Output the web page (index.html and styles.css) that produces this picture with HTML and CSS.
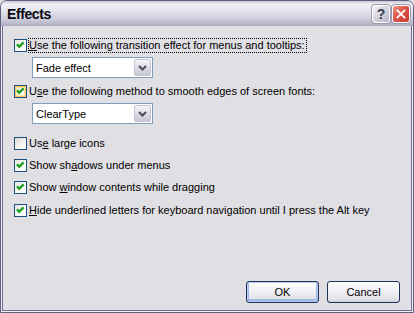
FILE: index.html
```html
<!DOCTYPE html>
<html lang="en">
<head>
    <meta charset="UTF-8">
    <meta name="viewport" content="width=device-width, initial-scale=1.0">
    <title>Effects</title>
    <link rel="stylesheet" href="styles.css">
</head>
<body>
    <div class="window">
        <div class="titlebar">
            <span class="title">Effects</span>
            <div class="title-buttons">
                <span class="tbtn help">?</span>
                <span class="tbtn close">
                    <svg width="18" height="18" viewBox="0 0 18 18"><path d="M5 5 L13 13 M13 5 L5 13" stroke="#fff" stroke-width="2" stroke-linecap="square"/></svg>
                </span>
            </div>
        </div>
        <div class="client">
            <div class="row">
                <span class="check on"><svg width="11" height="11" viewBox="0 0 11 11"><path d="M2 4.2 L4.2 6.8 L8.6 2.3" fill="none" stroke="#21a121" stroke-width="2.4"/></svg></span>
                <span class="label focus"><u>U</u>se the following transition effect for menus and tooltips:</span>
            </div>
            <div class="combo">
                <span class="combo-text">Fade effect</span>
                <span class="combo-btn"><svg width="9" height="6" viewBox="0 0 9 6"><path d="M1 1 L4.5 4.5 L8 1" fill="none" stroke="#4a4a5a" stroke-width="2"/></svg></span>
            </div>
            <div class="row">
                <span class="check on hot"><svg width="11" height="11" viewBox="0 0 11 11"><path d="M2 4.2 L4.2 6.8 L8.6 2.3" fill="none" stroke="#21a121" stroke-width="2.4"/></svg></span>
                <span class="label">U<u>s</u>e the following method to smooth edges of screen fonts:</span>
            </div>
            <div class="combo">
                <span class="combo-text">ClearType</span>
                <span class="combo-btn"><svg width="9" height="6" viewBox="0 0 9 6"><path d="M1 1 L4.5 4.5 L8 1" fill="none" stroke="#4a4a5a" stroke-width="2"/></svg></span>
            </div>
            <div class="row spaced">
                <span class="check off"></span>
                <span class="label">Us<u>e</u> large icons</span>
            </div>
            <div class="row tight">
                <span class="check on"><svg width="11" height="11" viewBox="0 0 11 11"><path d="M2 4.2 L4.2 6.8 L8.6 2.3" fill="none" stroke="#21a121" stroke-width="2.4"/></svg></span>
                <span class="label">Show sh<u>a</u>dows under menus</span>
            </div>
            <div class="row tight">
                <span class="check on"><svg width="11" height="11" viewBox="0 0 11 11"><path d="M2 4.2 L4.2 6.8 L8.6 2.3" fill="none" stroke="#21a121" stroke-width="2.4"/></svg></span>
                <span class="label">Show <u>w</u>indow contents while dragging</span>
            </div>
            <div class="row tight last">
                <span class="check on"><svg width="11" height="11" viewBox="0 0 11 11"><path d="M2 4.2 L4.2 6.8 L8.6 2.3" fill="none" stroke="#21a121" stroke-width="2.4"/></svg></span>
                <span class="label"><u>H</u>ide underlined letters for keyboard navigation until I press the Alt key</span>
            </div>
            <div class="buttons">
                <button class="btn default">OK</button>
                <button class="btn">Cancel</button>
            </div>
        </div>
    </div>
</body>
</html>
```
FILE: styles.css
```css
body {
    margin: 0;
    font-family: "Liberation Sans", Arial, sans-serif;
    font-size: 11px;
    color: #000;
    background: #e0dfe3;
}
.window {
    box-sizing: border-box;
    width: 414px;
    height: 313px;
    border: 1px solid #5f5f80;
    border-radius: 7px 7px 0 0;
    background: #eeeef4;
    display: flex;
    flex-direction: column;
    overflow: hidden;
}
.titlebar {
    height: 25px;
    flex: none;
    display: flex;
    align-items: center;
    justify-content: space-between;
    padding: 0 3px 0 6px;
    background: linear-gradient(#c3c3d3 0%, #f2f2f7 12%, #e6e6ee 35%, #d4d4e0 65%, #bdbdce 88%, #a9a9be 100%);
}
.title {
    font-weight: bold;
    font-size: 14px;
    letter-spacing: -0.4px;
    color: #0a0a14;
    margin-top: 1px;
}
.title-buttons {
    display: flex;
    gap: 2px;
    margin-top: 1px;
}
.tbtn {
    box-sizing: border-box;
    width: 18px;
    height: 18px;
    border: 1px solid #fff;
    border-radius: 3px;
    display: flex;
    align-items: center;
    justify-content: center;
    box-shadow: 0 0 0 1px #9a9ab0;
}
.help {
    background: linear-gradient(135deg, #f4f4f8, #c8c8d6 70%, #b4b4c6);
    color: #3c3c50;
    font-weight: bold;
    font-size: 14px;
}
.close {
    background: linear-gradient(135deg, #f09a88, #d9544a 45%, #c8382e);
}
.client {
    flex: 1;
    margin: 0 1px 1px;
    border: 1px solid #6e6e92;
    border-top: none;
    background: #e0dfe3;
    padding: 13px 11px 0 11px;
    display: flex;
    flex-direction: column;
}
.row {
    display: flex;
    align-items: center;
    height: 13px;
}
.row.spaced {
    margin-top: 6px;
}
.row.tight {
    margin-top: 9px;
}
.row.last {
    margin-top: 10px;
}
.check {
    box-sizing: border-box;
    width: 13px;
    height: 13px;
    flex: none;
    border: 1px solid #1c5180;
    background: linear-gradient(135deg, #e6e6e0, #fbfbfa 60%, #fff);
    display: flex;
    align-items: center;
    justify-content: center;
}
.check.hot {
    box-shadow: inset 0 0 0 1px #f8c55e, inset 0 0 0 2px #fde49c;
}
.check.off {
    background: linear-gradient(135deg, #d8d8d2, #f2f2ef 55%, #fff);
}
.label {
    margin-left: 1px;
    border: 1px dotted transparent;
    line-height: 13px;
    padding-right: 1px;
    white-space: nowrap;
}
.label.focus {
    border-color: #000;
}
.combo {
    box-sizing: border-box;
    width: 121px;
    height: 21px;
    margin: 5px 0 7px 18px;
    border: 1px solid #7f9db9;
    background: #fff;
    display: flex;
    align-items: center;
    justify-content: space-between;
    padding: 0 1px 0 3px;
}
.combo-btn {
    box-sizing: border-box;
    width: 17px;
    height: 17px;
    border: 1px solid #c3c3d3;
    border-radius: 2px;
    background: linear-gradient(#f6f6fa, #d9d9e4 60%, #c8c8d6);
    display: flex;
    align-items: center;
    justify-content: center;
}
.buttons {
    margin-top: auto;
    margin-bottom: 7px;
    display: flex;
    justify-content: flex-end;
    gap: 8px;
}
.btn {
    box-sizing: border-box;
    width: 73px;
    height: 22px;
    border: 1px solid #1f2f5c;
    border-radius: 3px;
    font-family: "Liberation Sans", Arial, sans-serif;
    font-size: 11px;
    color: #000;
    background: linear-gradient(#ffffff, #f2f2f5 40%, #e2e2ea 85%, #cdcdd8);
    padding: 0;
}
.btn.default {
    box-shadow: inset 0 0 0 1px #b6cdf0, inset 0 -1px 0 2px #9fb9e6;
}
```
